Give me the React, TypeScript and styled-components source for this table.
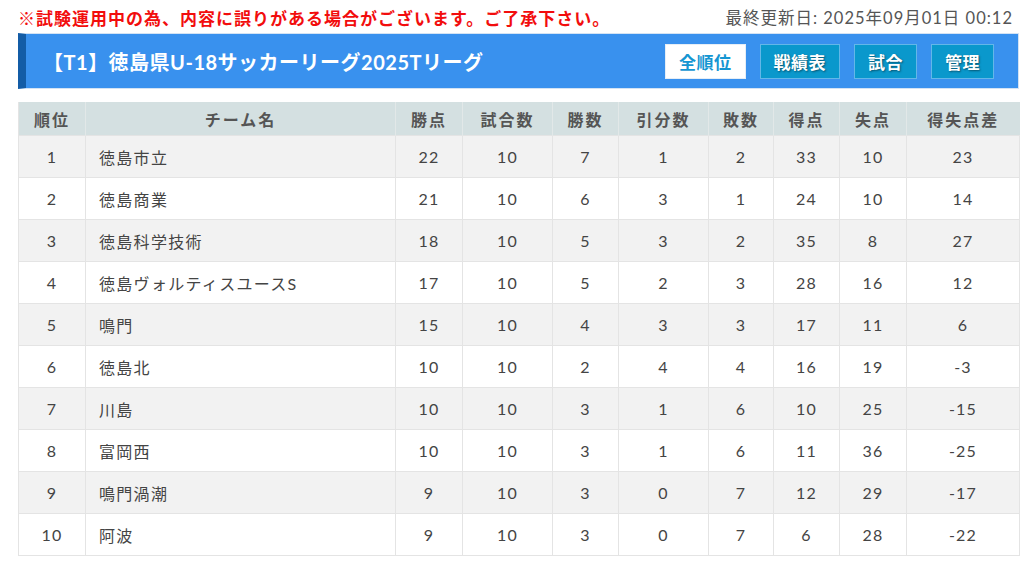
import React from "react";
import styled, { createGlobalStyle } from "styled-components";

const Global = createGlobalStyle`
  html, body { margin: 0; padding: 0; background: #fff; }
  body { font-family: Lato, "Noto Sans CJK JP", sans-serif; }
`;

const Page = styled.div`
  padding: 0 5px 0 18px;
  width: 1001px;
`;

const TopRow = styled.div`
  height: 33px;
  display: flex;
  align-items: center;
  justify-content: space-between;
`;

const Warning = styled.div`
  color: #f20d0d;
  font-weight: 700;
  font-size: 17px;
  letter-spacing: 1px;
  font-family: "Noto Sans CJK JP", sans-serif;
  margin-top: 1px;
`;

const Updated = styled.div`
  color: #555;
  font-size: 16.5px;
  letter-spacing: 1px;
  margin-right: 6px;
  margin-top: 1px;
`;

const TitleBar = styled.div`
  height: 54px;
  background: #3991ee;
  border: 1px solid #d3e3f4;
  border-left: 8px solid #135ca6;
  display: flex;
  align-items: center;
  justify-content: space-between;
  padding: 0 24px 0 17px;
`;

const Title = styled.h1`
  margin: 0;
  color: #fff;
  font-size: 20px;
  font-weight: 700;
  letter-spacing: 0.5px;
`;

const Buttons = styled.div`
  display: flex;
  gap: 14px;
`;

const Btn = styled.div<{ $active?: boolean }>`
  height: 33px;
  padding: 0 13px;
  display: flex;
  align-items: center;
  font-size: 17px;
  font-weight: 700;
  letter-spacing: 0.5px;
  font-family: "Noto Sans CJK JP", sans-serif;
  border: 1px solid ${(p) => (p.$active ? "#e6eef6" : "#63b7e8")};
  background: ${(p) => (p.$active ? "#fff" : "#0a98cc")};
  color: ${(p) => (p.$active ? "#1596d2" : "#fff")};
  text-shadow: ${(p) => (p.$active ? "none" : "1px 1px 2px rgba(0,0,0,0.45)")};
`;

const Table = styled.table`
  margin-top: 13px;
  width: 1001px;
  border-collapse: collapse;
  table-layout: fixed;
`;

const Th = styled.th`
  height: 33px;
  background: #d4e0e1;
  color: #555;
  font-weight: 700;
  font-size: 16px;
  letter-spacing: 2px;
  text-align: center;
  padding: 0;
  border-left: 1px solid #e2e8e8;
  &:first-child { border-left: 1px solid #e4e4e4; }
`;

const Tr = styled.tr`
  &:nth-child(odd) { background: #f2f2f2; }
  &:nth-child(even) { background: #fff; }
`;

const Td = styled.td<{ $left?: boolean }>`
  height: 41px;
  padding: 0 ${(p) => (p.$left ? "13px" : "0")};
  text-align: ${(p) => (p.$left ? "left" : "center")};
  color: #444;
  font-size: 16px;
  letter-spacing: ${(p) => (p.$left ? "1.3px" : "1.2px")};
  border: 1px solid #e4e4e4;
`;

const widths = [67, 310, 67, 90, 66, 90, 65, 66, 67, 113];
const heads = ["順位", "チーム名", "勝点", "試合数", "勝数", "引分数", "敗数", "得点", "失点", "得失点差"];

const rows: (string | number)[][] = [
  [1, "徳島市立", 22, 10, 7, 1, 2, 33, 10, 23],
  [2, "徳島商業", 21, 10, 6, 3, 1, 24, 10, 14],
  [3, "徳島科学技術", 18, 10, 5, 3, 2, 35, 8, 27],
  [4, "徳島ヴォルティスユースS", 17, 10, 5, 2, 3, 28, 16, 12],
  [5, "鳴門", 15, 10, 4, 3, 3, 17, 11, 6],
  [6, "徳島北", 10, 10, 2, 4, 4, 16, 19, -3],
  [7, "川島", 10, 10, 3, 1, 6, 10, 25, -15],
  [8, "富岡西", 10, 10, 3, 1, 6, 11, 36, -25],
  [9, "鳴門渦潮", 9, 10, 3, 0, 7, 12, 29, -17],
  [10, "阿波", 9, 10, 3, 0, 7, 6, 28, -22],
];

export default function App() {
  return (
    <>
      <Global />
      <Page>
        <TopRow>
          <Warning>※試験運用中の為、内容に誤りがある場合がございます。ご了承下さい。</Warning>
          <Updated>最終更新日: 2025年09月01日 00:12</Updated>
        </TopRow>
        <TitleBar>
          <Title>【T1】徳島県U-18サッカーリーグ2025Tリーグ</Title>
          <Buttons>
            <Btn $active>全順位</Btn>
            <Btn>戦績表</Btn>
            <Btn>試合</Btn>
            <Btn>管理</Btn>
          </Buttons>
        </TitleBar>
        <Table>
          <colgroup>
            {widths.map((w, i) => (
              <col key={i} style={{ width: w }} />
            ))}
          </colgroup>
          <thead>
            <tr>
              {heads.map((h) => (
                <Th key={h}>{h}</Th>
              ))}
            </tr>
          </thead>
          <tbody>
            {rows.map((r) => (
              <Tr key={r[0] as number}>
                {r.map((c, i) => (
                  <Td key={i} $left={i === 1}>
                    {c}
                  </Td>
                ))}
              </Tr>
            ))}
          </tbody>
        </Table>
      </Page>
    </>
  );
}
